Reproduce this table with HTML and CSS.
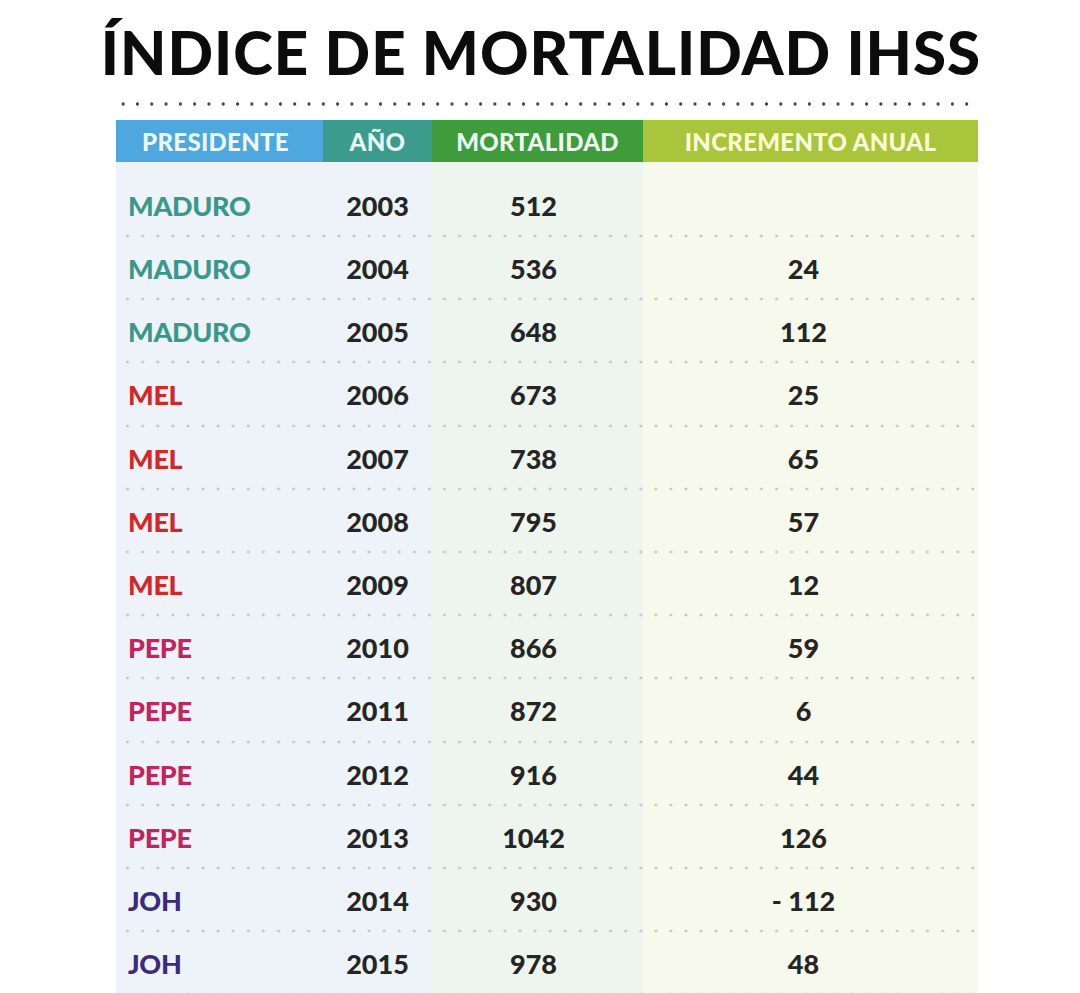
FILE: index.html
```html
<!DOCTYPE html>
<html lang="es">
<head>
<meta charset="utf-8">
<title>Índice de mortalidad IHSS</title>
<link rel="stylesheet" href="styles.css">
</head>
<body>
<div class="page">
  <h1 class="title">ÍNDICE DE MORTALIDAD IHSS</h1>
  <div class="table">
    <div class="dots-top"></div>
    <div class="head">
      <div class="h h-pres">PRESIDENTE</div>
      <div class="h h-year">AÑO</div>
      <div class="h h-mort">MORTALIDAD</div>
      <div class="h h-inc">INCREMENTO ANUAL</div>
    </div>
    <div class="body">
      <div class="row first"><div class="c pres maduro">MADURO</div><div class="c year">2003</div><div class="c mort">512</div><div class="c inc"></div></div>
      <div class="row"><div class="c pres maduro">MADURO</div><div class="c year">2004</div><div class="c mort">536</div><div class="c inc">24</div></div>
      <div class="row"><div class="c pres maduro">MADURO</div><div class="c year">2005</div><div class="c mort">648</div><div class="c inc">112</div></div>
      <div class="row"><div class="c pres mel">MEL</div><div class="c year">2006</div><div class="c mort">673</div><div class="c inc">25</div></div>
      <div class="row"><div class="c pres mel">MEL</div><div class="c year">2007</div><div class="c mort">738</div><div class="c inc">65</div></div>
      <div class="row"><div class="c pres mel">MEL</div><div class="c year">2008</div><div class="c mort">795</div><div class="c inc">57</div></div>
      <div class="row"><div class="c pres mel">MEL</div><div class="c year">2009</div><div class="c mort">807</div><div class="c inc">12</div></div>
      <div class="row"><div class="c pres pepe">PEPE</div><div class="c year">2010</div><div class="c mort">866</div><div class="c inc">59</div></div>
      <div class="row"><div class="c pres pepe">PEPE</div><div class="c year">2011</div><div class="c mort">872</div><div class="c inc">6</div></div>
      <div class="row"><div class="c pres pepe">PEPE</div><div class="c year">2012</div><div class="c mort">916</div><div class="c inc">44</div></div>
      <div class="row"><div class="c pres pepe">PEPE</div><div class="c year">2013</div><div class="c mort">1042</div><div class="c inc">126</div></div>
      <div class="row"><div class="c pres joh">JOH</div><div class="c year">2014</div><div class="c mort">930</div><div class="c inc">- 112</div></div>
      <div class="row"><div class="c pres joh">JOH</div><div class="c year">2015</div><div class="c mort">978</div><div class="c inc">48</div></div>
    </div>
  </div>
</div>
</body>
</html>
```

FILE: styles.css
```css
html, body {
  margin: 0;
  padding: 0;
  background: #ffffff;
}
body {
  font-family: "Lato", "Open Sans", sans-serif;
  color: #252525;
  overflow: hidden;
  height: 993px;
}
.page {
  width: 1080px;
}
.title {
  margin: 0;
  padding-top: 17px;
  height: 84px;
  box-sizing: border-box;
  text-align: center;
  font-size: 60px;
  font-weight: 900;
  line-height: 70px;
  color: #0c0c0c;
  letter-spacing: 1px;
  padding-left: 2px;
}
.table {
  margin-left: 116px;
  width: 862px;
}
.dots-top {
  height: 36px;
  background-image: radial-gradient(circle, #444 1.4px, transparent 1.9px);
  background-size: 14.3px 6px;
  background-repeat: repeat-x;
  background-position: 0 17px;
}
.head {
  display: grid;
  grid-template-columns: 207px 109px 211px 335px;
  height: 42px;
}
.h {
  display: flex;
  align-items: center;
  justify-content: center;
  color: #eef8f2;
  font-weight: 900;
  font-size: 24px;
  letter-spacing: 0.3px;
}
.h-pres { background: #4ea7de; padding-right: 8px; }
.h-year { background: #3b9c8e; }
.h-mort { background: #3e9c3a; }
.h-inc { background: #a9c53c; color: #fbfbd8; }
.body {
  background: linear-gradient(to right, #edf3f9 0, #edf3f9 316px, #eef5ee 316px, #eef5ee 527px, #f7f9ec 527px, #f7f9ec 862px);
}
.row {
  display: grid;
  grid-template-columns: 207px 109px 211px 335px;
  height: 63.2px;
  align-items: center;
  background-image: radial-gradient(circle, #c2c5c6 1.2px, transparent 1.7px);
  background-size: 15.1px 4px;
  background-repeat: repeat-x;
  background-position: 4px 100%;
}
.row.first {
  height: 76px;
  padding-top: 12px;
  box-sizing: border-box;
}
.c {
  font-weight: 900;
  font-size: 27px;
  padding-bottom: 2px;
}
.pres {
  padding-left: 12px;
  letter-spacing: -0.3px;
}
.year, .mort, .inc {
  text-align: center;
}
.mort { padding-right: 8px; }
.inc { padding-right: 14px; }
.maduro { color: #3a988b; }
.mel { color: #d2262b; }
.pepe { color: #c2245f; }
.joh { color: #3b2b7d; }
```
